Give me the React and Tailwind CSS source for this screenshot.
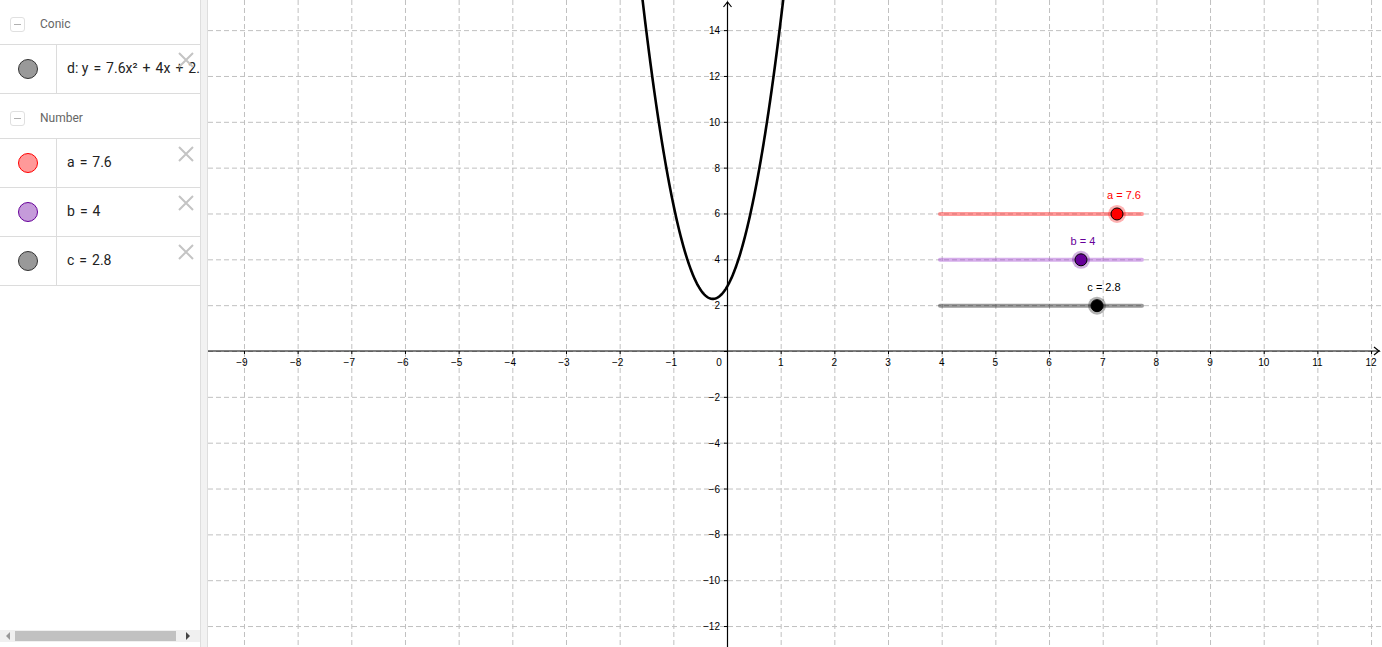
import React from "react";

const W = 1174;
const H = 647;
const OX = 519; // y-axis inside graphics view
const OY = 351; // x-axis
const UX = 53.67;
const UY = 22.92;

const px = (x) => OX + x * UX;
const py = (y) => OY - y * UY;

const f = (x) => 7.6 * x * x + 4 * x + 2.8;

function parabolaPath() {
  const pts = [];
  for (let x = -1.62; x <= 1.1; x += 0.01) {
    pts.push(`${px(x).toFixed(2)},${py(f(x)).toFixed(2)}`);
  }
  return "M" + pts.join(" L");
}

const font = "'Liberation Sans', Arial, sans-serif";

function Graphics() {
  const xs = [];
  for (let k = -9; k <= 12; k++) xs.push(k);
  const ys = [];
  for (let k = -12; k <= 14; k += 2) ys.push(k);

  const sliders = [
    { name: "a = 7.6", y: 6, pt: 1117, line: "#ff0000", dot: "#ff0000", color: "#ff0000", lx: 1124 },
    { name: "b = 4", y: 4, pt: 1081, line: "#9933cc", dot: "#660099", color: "#660099", lx: 1083 },
    { name: "c = 2.8", y: 2, pt: 1097, line: "#000000", dot: "#000000", color: "#000000", lx: 1104 },
  ];

  return (
    <svg width={W} height={H} className="block flex-1 bg-white">
      <g stroke="#c0c0c0" strokeWidth="1" strokeDasharray="5 3">
        {xs.map((k) => (
          <line key={"gx" + k} x1={px(k) + 0.5} y1={0} x2={px(k) + 0.5} y2={H} />
        ))}
        {ys.map((k) => (
          <line key={"gy" + k} x1={0} y1={py(k) + 0.5} x2={W} y2={py(k) + 0.5} />
        ))}
      </g>

      <g stroke="#000" strokeWidth="1.2" fill="none">
        <line x1={0} y1={OY} x2={W - 2} y2={OY} />
        <polyline points={`${W - 8},${OY - 4} ${W - 3},${OY} ${W - 8},${OY + 4}`} />
        <line x1={OX + 0.5} y1={2} x2={OX + 0.5} y2={H} />
        <polyline points={`${OX - 3.5},7 ${OX + 0.5},2 ${OX + 4.5},7`} />
        {xs.map((k) => (
          <line key={"tx" + k} x1={px(k) + 0.5} y1={OY} x2={px(k) + 0.5} y2={OY + 3} strokeWidth="1" />
        ))}
        {ys.map((k) => (
          <line key={"ty" + k} x1={OX - 3} y1={py(k) + 0.5} x2={OX} y2={py(k) + 0.5} strokeWidth="1" />
        ))}
      </g>

      <g fontFamily={font} fontSize="10" fill="#000">
        {xs
          .filter((k) => k !== 0)
          .map((k) => (
            <text key={"lx" + k} x={px(k) + (k < 0 ? -2 : 0)} y={OY + 15} textAnchor="middle">
              {k < 0 ? "\u2212" + -k : k}
            </text>
          ))}
        <text x={OX - 8} y={OY + 15} textAnchor="middle">
          0
        </text>
        {ys
          .filter((k) => k !== 0)
          .map((k) => (
            <text key={"ly" + k} x={OX - 7} y={py(k) + 4} textAnchor="end">
              {k < 0 ? "\u2212" + -k : k}
            </text>
          ))}
      </g>

      <path d={parabolaPath()} fill="none" stroke="#000" strokeWidth="2.6" strokeLinejoin="round" />

      {sliders.map((s) => {
        const y = py(s.y) + 0.5;
        const cx = s.pt - 208;
        return (
          <g key={s.name}>
            <line
              x1={732}
              y1={y}
              x2={934}
              y2={y}
              stroke={s.line}
              strokeOpacity="0.4"
              strokeWidth="4"
              strokeLinecap="round"
            />
            <circle cx={cx} cy={y} r="9" fill={s.dot} fillOpacity="0.3" />
            <circle cx={cx} cy={y} r="6" fill={s.dot} stroke="#000" strokeWidth="1" />
            <text
              x={s.lx - 208}
              y={y - 15}
              textAnchor="middle"
              fontFamily={font}
              fontSize="11"
              fill={s.color}
            >
              {s.name}
            </text>
          </g>
        );
      })}
    </svg>
  );
}

function CloseIcon() {
  return (
    <svg width="16" height="16" viewBox="0 0 16 16" className="absolute right-[6px] top-[7px]">
      <path d="M1 1 L15 15 M15 1 L1 15" stroke="#c4c4c4" strokeWidth="2" />
    </svg>
  );
}

function Op({ children }) {
  return <span className="px-[5px]">{children}</span>;
}

function Header({ label, h }) {
  return (
    <div className={`flex items-center pt-[4px] ${h} border-t border-[#dcdcdc] first:border-t-0`}>
      <div className="ml-[10px] w-[15px] h-[15px] rounded-[3px] border border-[#e0e0e0] flex items-center justify-center">
        <div className="w-[7px] h-px bg-[#b0b0b0]" />
      </div>
      <span className="ml-[15px] text-[12px] text-[#666666]">{label}</span>
    </div>
  );
}

function Item({ fill, stroke, children }) {
  return (
    <div className="relative flex h-[49px] border-t border-[#dcdcdc]">
      <div className="w-[57px] flex items-center justify-center border-r border-[#dcdcdc]">
        <div
          className="w-[20px] h-[20px] rounded-full border"
          style={{ backgroundColor: fill, borderColor: stroke }}
        />
      </div>
      <div className="flex-1 flex items-center pl-[10px] pb-[2px] overflow-hidden whitespace-nowrap text-[14px] text-[#222]">
        {children}
      </div>
      <CloseIcon />
    </div>
  );
}

export default function App() {
  return (
    <div
      className="flex w-[1382px] h-[647px] overflow-hidden bg-white"
      style={{ fontFamily: "Roboto, 'Liberation Sans', sans-serif" }}
    >
      <div className="relative w-[200px] shrink-0 flex flex-col bg-white">
        <Header label="Conic" h="h-[44px]" />
        <Item fill="#999999" stroke="#333333">
          d: y<Op>=</Op>7.6x²<Op>+</Op>4x<Op>+</Op>2.8
        </Item>
        <Header label="Number" h="h-[45px]" />
        <Item fill="#ff9999" stroke="#ff0000">
          a<Op>=</Op>7.6
        </Item>
        <Item fill="#c59bda" stroke="#660099">
          b<Op>=</Op>4
        </Item>
        <Item fill="#999999" stroke="#333333">
          c<Op>=</Op>2.8
        </Item>
        <div className="border-t border-[#dcdcdc]" />
        <div className="flex-1" />
        <div className="flex items-center h-[12px] mb-[5px] bg-[#f0f0f0]">
          <div className="w-[15px] flex justify-center">
            <div className="w-0 h-0 border-y-[4px] border-y-transparent border-r-[4px] border-r-[#999]" />
          </div>
          <div className="w-[161px] h-[10px] bg-[#c1c1c1]" />
          <div className="flex-1 flex justify-center">
            <div className="w-0 h-0 border-y-[4px] border-y-transparent border-l-[4px] border-l-[#444]" />
          </div>
        </div>
      </div>
      <div className="w-[8px] shrink-0 bg-[#f2f2f2] border-x border-[#dedede]" />
      <Graphics />
    </div>
  );
}
